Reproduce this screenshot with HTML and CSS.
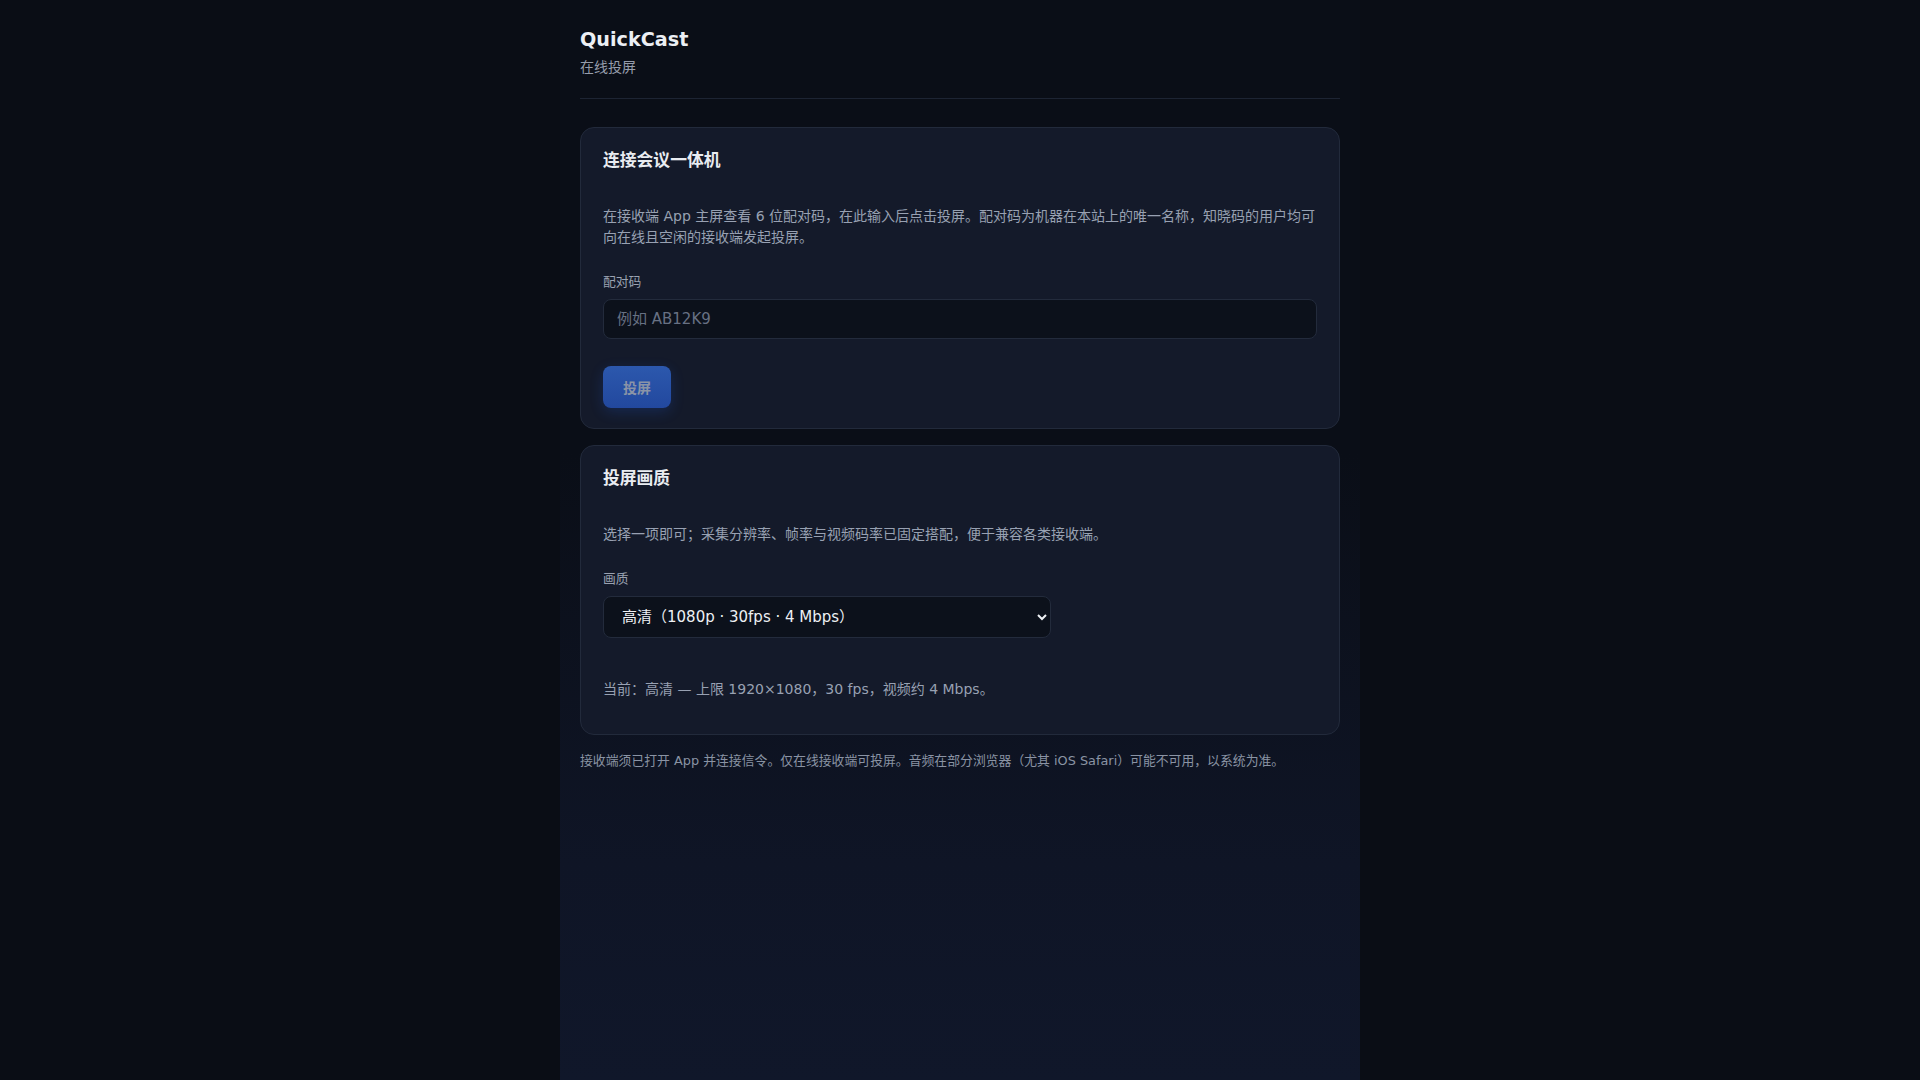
FILE: index.html
```html
<!DOCTYPE html>
<html lang="zh-CN">
<head>
<meta charset="utf-8">
<title>QuickCast</title>
<link rel="stylesheet" href="styles.css">
</head>
<body>
<div class="page">
  <header class="header">
    <h1 class="title">QuickCast</h1>
    <div class="subtitle">在线投屏</div>
  </header>

  <section class="card">
    <h2 class="card-title">连接会议一体机</h2>
    <p class="desc">在接收端 App 主屏查看 6 位配对码，在此输入后点击投屏。配对码为机器在本站上的唯一名称，知晓码的用户均可向在线且空闲的接收端发起投屏。</p>
    <label class="field-label" for="code">配对码</label>
    <input class="text-input" id="code" type="text" placeholder="例如 AB12K9">
    <div class="actions">
      <button class="btn-primary" type="button" disabled>投屏</button>
    </div>
  </section>

  <section class="card">
    <h2 class="card-title">投屏画质</h2>
    <p class="desc">选择一项即可；采集分辨率、帧率与视频码率已固定搭配，便于兼容各类接收端。</p>
    <label class="field-label" for="quality">画质</label>
    <select class="select" id="quality">
      <option>高清（1080p · 30fps · 4 Mbps）</option>
      <option>标清（720p · 30fps · 2 Mbps）</option>
    </select>
    <p class="status">当前：高清 — 上限 1920×1080，30 fps，视频约 4 Mbps。</p>
  </section>

  <p class="footnote">接收端须已打开 App 并连接信令。仅在线接收端可投屏。音频在部分浏览器（尤其 iOS Safari）可能不可用，以系统为准。</p>
</div>
</body>
</html>
```

FILE: styles.css
```css
html {
  background: #0a0d15;
}

body {
  margin: 0;
  font-family: "DejaVu Sans", "Noto Sans CJK SC", sans-serif;
  color: #e5e7eb;
}

.page {
  box-sizing: border-box;
  max-width: 800px;
  min-height: 100vh;
  margin: 0 auto;
  padding: 28px 20px 40px;
  background: linear-gradient(180deg, #0a0e17 0%, #0a0e17 42%, #0f1526 80%, #10172a 100%);
}

.header {
  padding-bottom: 20px;
  border-bottom: 1px solid #1d2433;
  margin-bottom: 28px;
}

.title {
  margin: 0;
  font-size: 19.2px;
  line-height: 1.2;
  font-weight: 700;
  color: #eceff4;
}

.subtitle {
  margin-top: 6px;
  font-size: 14px;
  line-height: 21px;
  color: #959cab;
}

.card {
  background: #141a2a;
  border: 1px solid #222a3b;
  border-radius: 14px;
  padding: 22px 22px 20px;
  margin-bottom: 16px;
}

.card + .card {
  margin-bottom: 16px;
}

.card-title {
  margin: 0 0 36px;
  font-size: 16.8px;
  line-height: 20px;
  font-weight: 700;
  color: #e9ecf1;
}

.desc {
  margin: 0 0 24px;
  font-size: 14px;
  line-height: 21px;
  color: #98a1b2;
}

.field-label {
  display: block;
  margin-bottom: 8px;
  font-size: 12.8px;
  line-height: 19.2px;
  color: #9aa2b1;
}

.text-input {
  display: block;
  box-sizing: border-box;
  width: 100%;
  height: 40px;
  padding: 0 13px;
  font-family: inherit;
  font-size: 15px;
  color: #e5e7eb;
  background: #0c111b;
  border: 1px solid #232b3c;
  border-radius: 8px;
  outline: none;
}

.text-input::placeholder {
  color: #677083;
}

.actions {
  margin-top: 27px;
  display: flex;
}

.btn-primary {
  height: 42px;
  padding: 0 20px;
  font-family: inherit;
  font-size: 14px;
  font-weight: 700;
  color: #8a94a7;
  background: linear-gradient(180deg, #2c58ad 0%, #22489e 100%);
  border: none;
  border-radius: 8px;
  box-shadow: 0 4px 14px rgba(37, 99, 235, 0.2);
}

.select {
  display: block;
  box-sizing: border-box;
  width: 100%;
  max-width: 448px;
  height: 42px;
  padding: 0 10px 0 14px;
  font-family: inherit;
  font-size: 15px;
  font-weight: 400;
  color: #eef0f4;
  background-color: #0c111b;
  border: 1px solid #232b3c;
  border-radius: 8px;
  color-scheme: dark;
  outline: none;
}

.status {
  margin: 41px 0 14px;
  font-size: 14px;
  line-height: 21px;
  color: #98a1b2;
}

.footnote {
  margin: 0;
  font-size: 12.85px;
  line-height: 19.5px;
  color: #8a93a4;
}
```
